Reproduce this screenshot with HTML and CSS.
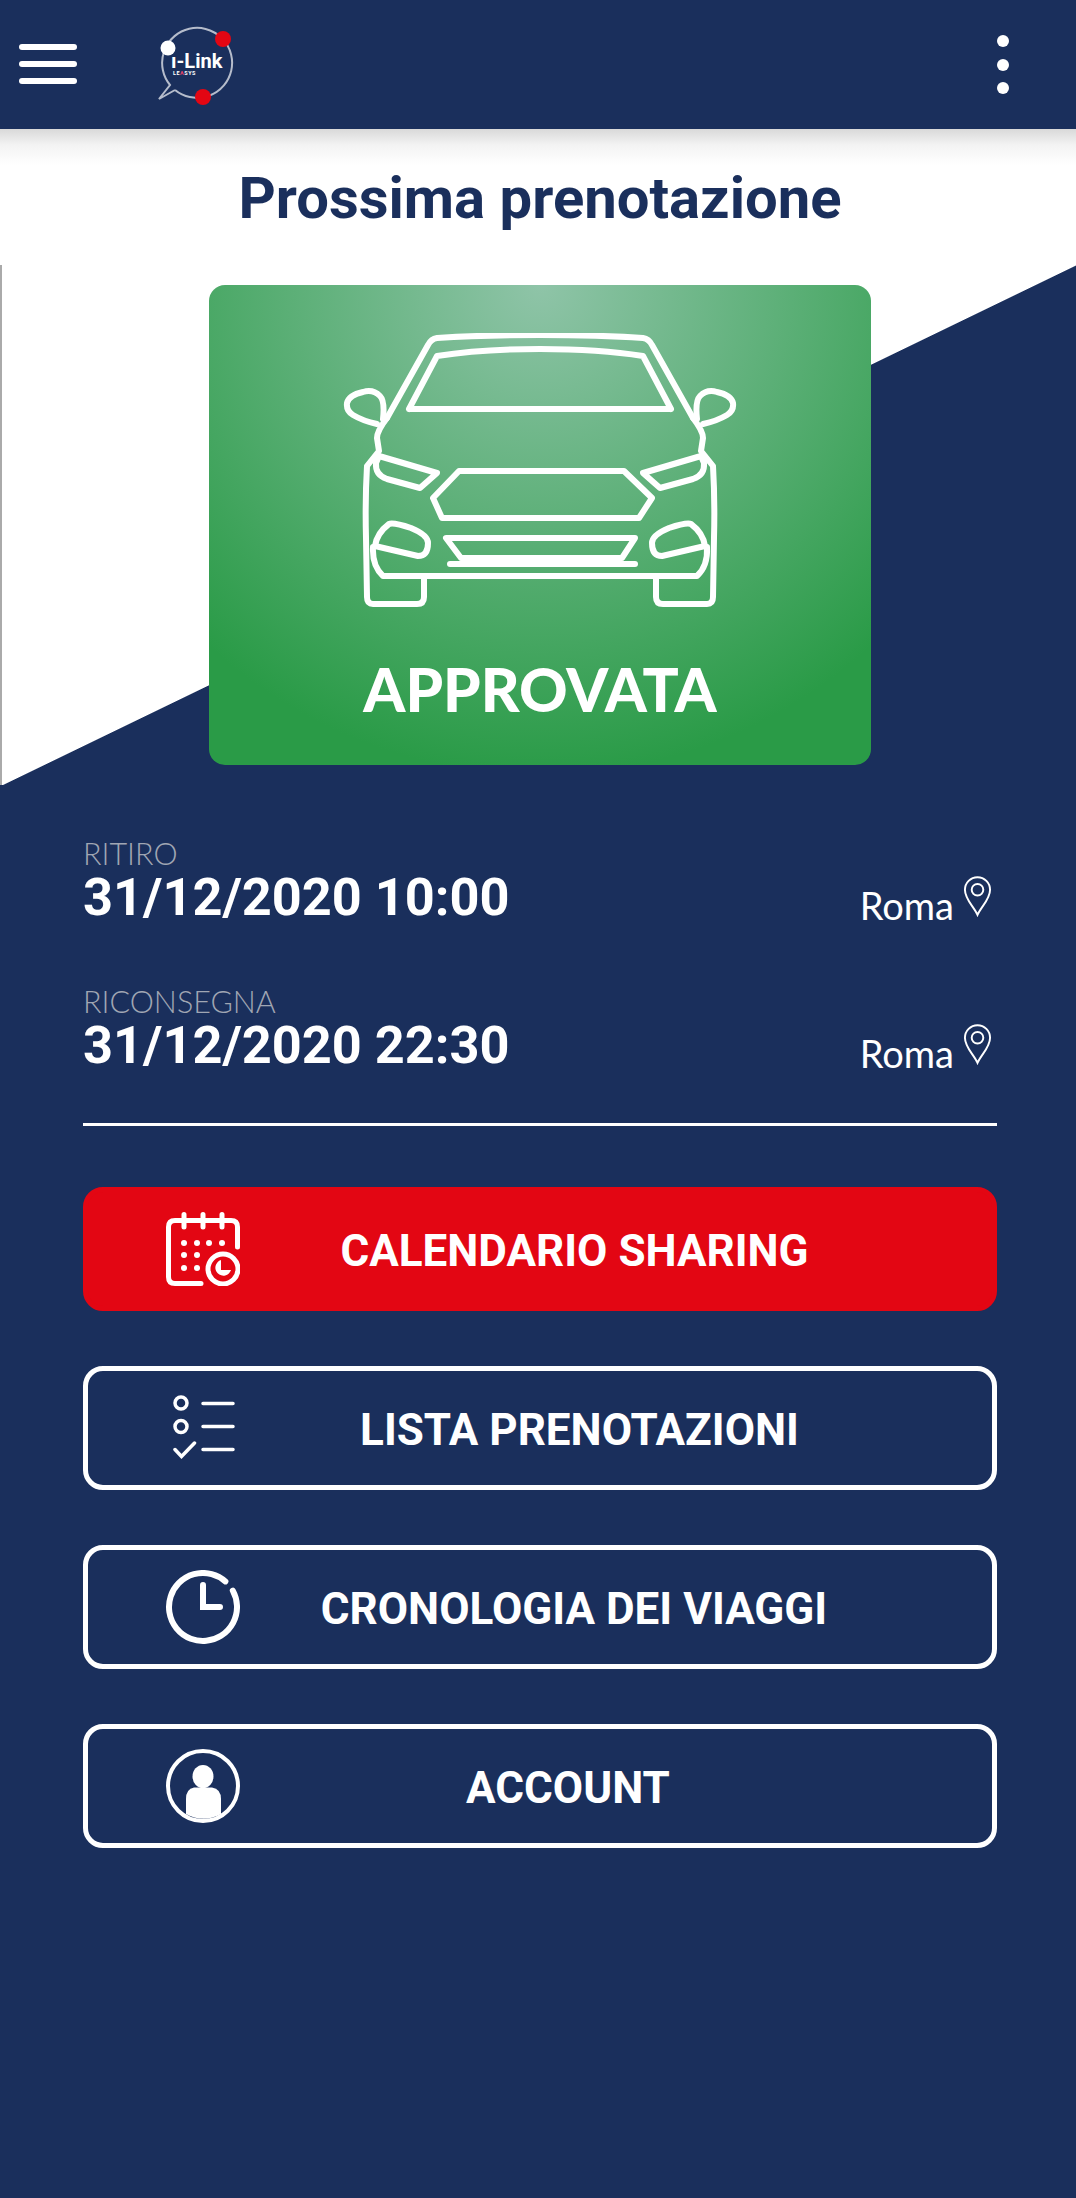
FILE: index.html
```html
<!DOCTYPE html>
<html>
	<head>
		<meta charset="UTF-8">
		<title>Prossima prenotazione</title>
		<link rel="stylesheet" href="styles.css">
	</head>
	<body>
		<div class="header">
			<div class="burger"><span></span><span></span><span></span></div>
			<svg class="logo" viewBox="0 0 90 90">
				<path class="logo-ring" d="M17 64 L1 73 L12 59 A35 35 0 1 1 17 64"/>
				<circle class="logo-white" cx="10" cy="22" r="7.5"/>
				<circle class="logo-red" cx="65" cy="13" r="8"/>
				<circle class="logo-red" cx="45" cy="71" r="8"/>
				<text class="logo-name" x="13" y="42">ı-Link</text>
				<text class="logo-sub" x="15" y="49">LE<tspan class="logo-sub-a">A</tspan>SYS</text>
			</svg>
			<div class="dots"><span></span><span></span><span></span></div>
		</div>

		<h1 class="title">Prossima prenotazione</h1>

		<div class="hero">
			<div class="status">
				<svg class="car" viewBox="342 332 394 274">
					<g id="half">
						<path d="M386 417 Q376 430 376 437 L378 450 L366 465 Q364 500 365 537 L366 596 Q366 603 372 603 H416 Q423 603 423 596 V576"/>
						<path d="M372 546 Q371 565 382 575 H539"/>
						<path d="M386 417 L427 344 Q430 338 436 337 Q480 334 539 334"/>
						<path d="M408 408 L436 355 Q480 348 539 348 M408 408 H539"/>
						<path d="M382 418 Q384 400 379 395 Q372 388 362 391 Q348 394 346 402 Q345 410 352 414 Q362 420 376 423"/>
						<path d="M378 455 L436 472 L419 487 L386 478 Q374 474 375 462 Z"/>
						<path d="M388 523 Q392 521 410 527 Q427 534 427 542 Q427 555 417 555 L374 545 Q376 532 388 523 Z"/>
					</g>
					<use href="#half" transform="matrix(-1 0 0 1 1078 0)"/>
					<path d="M458 470 H623 L651 497 L638 517 H441 L432 497 Z"/>
					<path d="M445 537 H634 L621 557 H460 Z"/>
					<path d="M449 563 H634"/>
				</svg>
				<div class="status-text">APPROVATA</div>
			</div>
		</div>

		<div class="trips">
			<div class="trip">
				<div>
					<div class="trip-label">RITIRO</div>
					<div class="trip-date">31/12/2020 10:00</div>
				</div>
				<div class="trip-place">
					<span>Roma</span>
					<svg class="pin" viewBox="0 0 30 42">
						<path d="M15 40 C11 31 2 24 2 14 A13 13 0 0 1 28 14 C28 24 19 31 15 40 Z"/>
						<circle cx="15" cy="14" r="6"/>
					</svg>
				</div>
			</div>
			<div class="trip trip-last">
				<div>
					<div class="trip-label">RICONSEGNA</div>
					<div class="trip-date">31/12/2020 22:30</div>
				</div>
				<div class="trip-place">
					<span>Roma</span>
					<svg class="pin" viewBox="0 0 30 42">
						<path d="M15 40 C11 31 2 24 2 14 A13 13 0 0 1 28 14 C28 24 19 31 15 40 Z"/>
						<circle cx="15" cy="14" r="6"/>
					</svg>
				</div>
			</div>
			<div class="divider"></div>
		</div>

		<div class="menu">
			<a class="btn btn-red">
				<svg class="ico" viewBox="0 0 74 74">
					<path class="ln" d="M71.5 35 V15 Q71.5 8.5 65 8.5 H9 Q2.5 8.5 2.5 15 V65 Q2.5 71.5 9 71.5 H35"/>
					<path class="ln" d="M18 2.5 V15 M37 2.5 V15 M56 2.5 V15"/>
					<g class="fill">
						<circle cx="18" cy="31" r="3"/><circle cx="31" cy="31" r="3"/><circle cx="43" cy="31" r="3"/><circle cx="56" cy="31" r="3"/>
						<circle cx="18" cy="43" r="3"/><circle cx="31" cy="43" r="3"/>
						<circle cx="18" cy="56" r="3"/><circle cx="31" cy="56" r="3"/>
					</g>
					<circle class="ln" cx="57" cy="57" r="15"/>
					<path class="fill" d="M55 48 A8 8 0 1 0 65 58 H55 Z"/>
				</svg>
				<span class="btn-text t-calendar">CALENDARIO SHARING</span>
			</a>
			<a class="btn">
				<svg class="ico ico-list" viewBox="0 0 62 66">
					<circle class="ln3" cx="8" cy="8" r="6"/>
					<circle class="ln3" cx="8" cy="31.5" r="6"/>
					<path class="ln3" d="M2 54.5 L8.5 61.5 L21.5 48"/>
					<path class="ln3" d="M30 8.5 H60 M30 31.5 H60 M30 54.5 H60"/>
				</svg>
				<span class="btn-text t-lista">LISTA PRENOTAZIONI</span>
			</a>
			<a class="btn">
				<svg class="ico" viewBox="0 0 74 74">
					<path class="ln6" d="M66.8 20.6 A34 34 0 1 1 59.4 11.4"/>
					<path class="ln6" d="M37 15 V37 H54"/>
				</svg>
				<span class="btn-text t-crono">CRONOLOGIA DEI VIAGGI</span>
			</a>
			<a class="btn">
				<svg class="ico" viewBox="0 0 74 74">
					<circle class="ln4" cx="37" cy="37" r="35"/>
					<ellipse class="fill" cx="37" cy="27.5" rx="10.5" ry="11.5"/>
					<path class="fill" d="M20 65 V50 Q20 40 28 38.5 H46 Q55 40 55 50 V65 A35 35 0 0 1 20 65 Z"/>
				</svg>
				<span class="btn-text t-account">ACCOUNT</span>
			</a>
		</div>
	</body>
</html>
```
FILE: styles.css
```css
*{
	margin: 0;
	padding: 0;
	box-sizing: border-box;
}
body{
	height: 2198px;
	overflow: hidden;
	background: #1a2f5c;
	font-family: "Roboto", "Liberation Sans", sans-serif;
	color: #fff;
}
.header{
	height: 129px;
	background: #1a2f5c;
	display: flex;
	align-items: center;
	padding: 0 0 0 19px;
}
.burger{
	width: 58px;
	margin-top: -2px;
	display: flex;
	flex-direction: column;
	gap: 11px;
}
.burger span{
	display: block;
	height: 6px;
	border-radius: 3px;
	background: #fff;
}
.logo{
	width: 90px;
	height: 90px;
	margin-left: 81px;
	margin-top: 13px;
}
.logo-ring{
	fill: none;
	stroke: #b5bccb;
	stroke-width: 2;
}
.logo-white{
	fill: #fff;
}
.logo-red{
	fill: #e30613;
}
.logo-name{
	fill: #fff;
	font-size: 20px;
	font-weight: 700;
}
.logo-sub{
	fill: #fff;
	font-size: 5.5px;
	font-weight: 700;
	letter-spacing: .5px;
}
.logo-sub-a{
	fill: #e8446a;
}
.dots{
	margin-left: auto;
	margin-right: 67px;
	display: flex;
	flex-direction: column;
	gap: 11.5px;
}
.dots span{
	display: block;
	width: 12px;
	height: 12px;
	border-radius: 50%;
	background: #fff;
}
.title{
	height: 136px;
	padding-left: 4px;
	background: linear-gradient(#d9d9d9 0, #f3f3f3 16px, #fff 36px);
	color: #1a2f5c;
	font-size: 58px;
	font-weight: 700;
	line-height: 139px;
	text-align: center;
}
.hero{
	height: 520px;
	padding-top: 20px;
	background: linear-gradient(to bottom right, #fff 50%, #1a2f5c 50.1%);
	border-left: 2px solid #aaa;
}
.status{
	width: 662px;
	height: 480px;
	margin-left: 207px;
	border-radius: 16px;
	background: radial-gradient(circle 490px at 50% 0, #8fc4a8 0%, #2a9b47 100%);
	text-align: center;
	padding-top: 48px;
}
.car{
	display: block;
	width: 394px;
	height: 274px;
	margin: 0 auto;
	fill: none;
	stroke: #fff;
	stroke-width: 6;
	stroke-linejoin: round;
	stroke-linecap: round;
}
.status-text{
	font-family: "Lato", "Liberation Sans", sans-serif;
	font-weight: 900;
	font-size: 60px;
	line-height: 70px;
	margin-top: 47px;
}
.trips{
	padding: 52px 79px 0 83px;
}
.trip{
	display: flex;
	justify-content: space-between;
	height: 148px;
}
.trip-last{
	height: 138px;
}
.trip-label{
	font-family: "Lato", "Liberation Sans", sans-serif;
	font-weight: 300;
	font-size: 30.5px;
	line-height: 32px;
	color: #a0a6b3;
}
.trip-date{
	font-size: 52.3px;
	font-weight: 700;
	line-height: 56px;
}
.trip-place{
	display: flex;
	align-items: flex-end;
	gap: 9px;
	height: 44px;
	margin-top: 46px;
	padding-right: 5px;
	font-family: "Lato", "Liberation Sans", sans-serif;
	font-size: 38px;
	line-height: 44px;
}
.pin{
	width: 29px;
	height: 41px;
	margin-bottom: 10px;
	fill: none;
	stroke: #fff;
	stroke-width: 2;
}
.divider{
	height: 3px;
	background: #fff;
}
.menu{
	margin: 0 79px 0 83px;
	padding-top: 61px;
	display: flex;
	flex-direction: column;
	gap: 55px;
}
.btn{
	display: flex;
	align-items: center;
	height: 124px;
	padding: 0 78px;
	border: 5px solid #fff;
	border-radius: 20px;
}
.btn-red{
	background: #e30613;
	border-color: #e30613;
}
.ico{
	width: 74px;
	height: 74px;
	flex: none;
}
.ico-list{
	width: 62px;
	height: 66px;
	margin: 0 5px 0 7px;
}
.ln,.ln3,.ln4,.ln6{
	fill: none;
	stroke: #fff;
	stroke-linecap: round;
}
.ln{
	stroke-width: 5;
}
.ln3{
	stroke-width: 3.5;
}
.ln4{
	stroke-width: 4;
}
.ln6{
	stroke-width: 6;
}
.fill{
	fill: #fff;
}
.btn-text{
	flex: 1;
	padding-top: 3px;
	text-align: center;
	font-size: 44px;
	font-weight: 700;
}
.t-calendar{
	padding-right: 5px;
}
.t-lista{
	padding-left: 5px;
}
.t-crono{
	padding-right: 6px;
}
.t-account{
	padding-right: 18px;
}
```
